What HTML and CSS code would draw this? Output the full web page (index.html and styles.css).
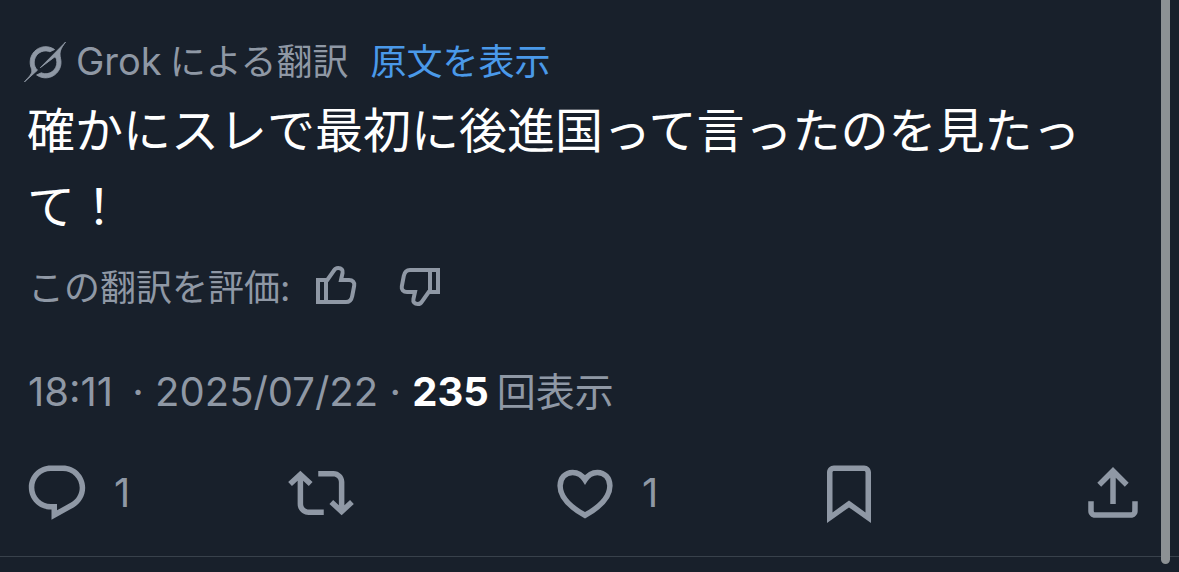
FILE: index.html
```
<!DOCTYPE html>
<html lang="ja">
<head>
	<meta charset="UTF-8">
	<meta name="viewport" content="width=device-width, initial-scale=1">
	<title>ポスト</title>
	<link rel="stylesheet" href="styles.css">
</head>
<body>
	<article class="post">
		<div class="source">
			<svg class="grok" viewBox="0 0 33 32" aria-hidden="true"><path d="M12.745 20.54l10.97-8.19c.539-.4 1.307-.244 1.564.38 1.349 3.288.746 7.241-1.938 9.955-2.683 2.714-6.417 3.31-9.83 1.954l-3.728 1.745c5.347 3.697 11.84 2.782 15.898-1.324 3.219-3.255 4.216-7.692 3.284-11.693l.008.009c-1.351-5.878.332-8.227 3.782-13.031L33 0l-4.54 4.59v-.014L12.743 20.544m-2.263 1.987c-3.837-3.707-3.175-9.446.1-12.755 2.42-2.449 6.388-3.448 9.852-1.979l3.72-1.737c-.67-.49-1.53-1.017-2.515-1.387-4.455-1.854-9.789-.931-13.41 2.728-3.483 3.523-4.579 8.94-2.697 13.561 1.405 3.454-.899 5.898-3.22 8.364C1.49 30.2.666 31.074 0 32l10.478-9.466"/></svg>
			<span class="by"><span class="name">Grok</span><span>による翻訳</span></span>
			<a href="#">原文を表示</a>
		</div>
		<p class="body">確かにスレで最初に後進国って言ったのを見たって！</p>
		<div class="rate">
			<span>この翻訳を評価:</span>
			<button type="button" aria-label="良い">
				<svg class="thumb" viewBox="0 0 44 44"><path d="M4 17h9.300L20 7.500C21 5.500 22.500 5 24.300 5c3 0 4.900 2.200 4.300 4.800L27 17h8c3.700 0 5.800 2.300 5.200 5.600l-2 10.500c-.8 4-2.700 6-6.200 6H4zM12 17v22"/></svg>
			</button>
			<button type="button" aria-label="悪い">
				<svg class="thumb" viewBox="0 0 44 44"><path transform="rotate(180 22 23)" d="M4 17h9.300L20 7.500C21 5.500 22.500 5 24.300 5c3 0 4.900 2.200 4.300 4.800L27 17h8c3.700 0 5.800 2.300 5.200 5.600l-2 10.500c-.8 4-2.700 6-6.200 6H4zM12 17v22"/></svg>
			</button>
		</div>
		<div class="meta"><time class="time">18:11</time> · <time>2025/07/22</time> · <b>235</b><span class="views">回表示</span></div>
		<div class="actions">
			<button type="button" aria-label="返信 1">
				<svg viewBox="0 0 24 24"><path d="M1.751 10c0-4.420 3.584-8 8.005-8h4.366c4.490 0 8.129 3.640 8.129 8.130 0 2.960-1.607 5.680-4.196 7.110l-8.054 4.460v-3.690h-.067c-4.490.1-8.183-3.510-8.183-8.010zm8.005-6c-3.317 0-6.005 2.690-6.005 6 0 3.370 2.770 6.080 6.138 6.010l.351-.01h1.761v2.300l5.087-2.810c1.951-1.080 3.163-3.130 3.163-5.360 0-3.390-2.744-6.130-6.129-6.130H9.756z"/></svg>
				<span>1</span>
			</button>
			<button type="button" aria-label="リポスト">
				<svg viewBox="0 0 24 24"><path d="M4.500 3.880l4.432 4.140-1.364 1.460L5.500 7.550V16c0 1.100.896 2 2 2H13v2H7.500c-2.209 0-4-1.790-4-4V7.550L1.432 9.480.068 8.020 4.500 3.880zM16.500 6H11V4h5.500c2.209 0 4 1.790 4 4v8.450l2.068-1.930 1.364 1.460-4.432 4.140-4.432-4.140 1.364-1.460 2.068 1.930V8c0-1.100-.896-2-2-2z"/></svg>
			</button>
			<button type="button" aria-label="いいね 1">
				<svg class="heart" viewBox="0 0 24 24"><path d="M12 7.200C10.900 5.400 9.300 4.500 7.500 4.500 4.850 4.500 2.950 6.600 2.950 9.400c0 3.900 3.350 7.600 9.050 10.700 5.700-3.100 9.050-6.800 9.050-10.700 0-2.800-1.900-4.900-4.550-4.900-1.800 0-3.400.9-4.500 2.700z"/></svg>
				<span>1</span>
			</button>
			<button type="button" aria-label="ブックマーク">
				<svg viewBox="0 0 24 24"><path d="M4 4.500C4 3.120 5.119 2 6.500 2h11C18.881 2 20 3.120 20 4.500v18.440l-8-5.710-8 5.710V4.500zM6.500 4c-.276 0-.5.22-.5.5v14.560l6-4.290 6 4.290V4.500c0-.28-.224-.5-.5-.5h-11z"/></svg>
			</button>
			<button type="button" aria-label="共有">
				<svg viewBox="0 0 24 24"><path d="M12 2.590l5.700 5.700-1.410 1.420L13 6.410V16h-2V6.410l-3.300 3.300-1.410-1.420L12 2.590zM21 15l-.02 3.510c0 1.380-1.120 2.490-2.500 2.490H5.500C4.110 21 3 19.880 3 18.500V15h2v3.500c0 .28.22.5.5.5h12.980c.28 0 .5-.22.5-.5L19 15h2z"/></svg>
			</button>
		</div>
	</article>
	<div class="scrollbar"></div>
</body>
</html>
```
FILE: styles.css
```
*{box-sizing: border-box;}
body{margin: 0; min-height: 100vh; position: relative; background: #18202b; color: #8f98a5; font-family: Inter, "Noto Sans CJK JP", sans-serif; font-size: 36px; line-height: 44px;}
button{display: flex; align-items: center; margin: 0; padding: 0; border: none; background: none; color: inherit; font: inherit; cursor: pointer;}
svg{display: block; flex: none; fill: currentColor;}
a{color: #4a99e9; text-decoration: none;}

.post{padding: 39px 33px 30px 24px; border-bottom: 1px solid #38414b;}
.source{display: flex; align-items: center;}
.grok{width: 42px; height: 40px; margin-right: 10px; stroke: currentColor; stroke-width: .7;}
.by{display: flex; align-items: baseline; gap: 8px; margin-right: 22px;}
.name{font-size: 38px;}
.body{margin: 9px 0 18px; padding-left: 3px; color: #fff; font-size: 48px; line-height: 76px;}
.rate{display: flex; align-items: center; height: 44px; padding-left: 4px;}
.rate span{margin-right: 24px; line-height: normal;}
.rate button + button{margin-left: 40px;}
.thumb{width: 44px; height: 44px; fill: none; stroke: currentColor; stroke-width: 4;}
.meta{margin: 61px 0 44px; padding-left: 4px; font-size: 40px; line-height: 48px;}
.meta b{color: #fff; font-weight: 700;}
.time{margin-right: 8px;}
.views{margin-left: 8px; font-size: 39px;}

.actions{display: grid; grid-template-columns: repeat(4, 1fr) 66px; font-size: 40px;}
.actions button{gap: 24px;}
.actions svg{width: 66px; height: 66px;}
.actions .heart{fill: none; stroke: currentColor; stroke-width: 2;}

/* overlay scrollbar */
.scrollbar{position: absolute; top: -8px; right: 9px; bottom: 8px; width: 9px; border-radius: 5px; background: #8c9194;}
```
